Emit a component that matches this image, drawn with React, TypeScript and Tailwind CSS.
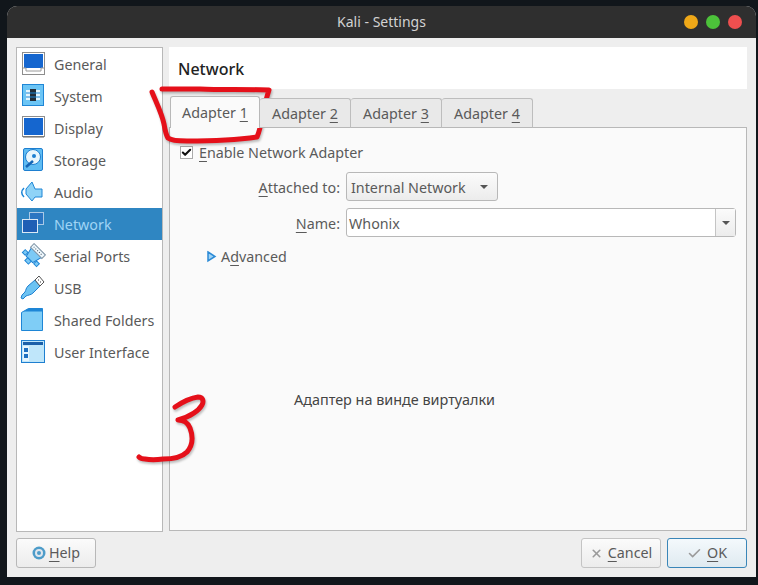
import React from 'react';
import { Check, X } from 'lucide-react';

const font = "font-['Noto_Sans','Open_Sans',sans-serif]";

// underlined mnemonic letter, like Qt shortcuts
const U = ({ children }: { children: React.ReactNode }) => (
  <span className="underline decoration-[1px] underline-offset-[3px]">{children}</span>
);

const GeneralIcon = () => (
  <svg width="26" height="26" viewBox="0 0 26 26">
    <rect x="2.5" y="1.5" width="22" height="22" fill="#fff" stroke="#8d8d8d" />
    <rect x="4" y="3" width="19" height="14" fill="#1566cf" />
    <path d="M3 17h3v3h15v-3h3" fill="none" stroke="#9a9a9a" />
  </svg>
);

const SystemIcon = () => (
  <svg width="26" height="26" viewBox="0 0 26 26">
    <rect x="2.5" y="1.5" width="21" height="21" fill="#6cc5f5" stroke="#1f86d6" />
    <rect x="6" y="7" width="14" height="10" fill="#e5f5fd" />
    <rect x="10" y="6" width="6" height="12" fill="#232c38" />
    <path d="M6 10h14M6 14h14" stroke="#1f86d6" />
  </svg>
);

const DisplayIcon = () => (
  <svg width="26" height="26" viewBox="0 0 26 26">
    <rect x="2.5" y="1.5" width="22" height="20" fill="#fff" stroke="#8d8d8d" />
    <rect x="4" y="3" width="19" height="17" fill="#1566cf" />
    <path d="M3 22h21" stroke="#666" />
  </svg>
);

const StorageIcon = () => (
  <svg width="26" height="26" viewBox="0 0 26 26">
    <rect x="3.5" y="1.5" width="19" height="22" rx="1.5" fill="#5fbcf2" stroke="#1e7fd0" />
    <circle cx="13" cy="10" r="7.5" fill="#e8f6fd" stroke="#1e7fd0" />
    <circle cx="14" cy="9" r="2" fill="#1e7fd0" />
    <path d="M6 20l7-6" stroke="#1565b5" strokeWidth="2.5" />
  </svg>
);

const AudioIcon = () => (
  <svg width="26" height="26" viewBox="0 0 26 26">
    <path d="M6 10L12 3L15 10H22V18H15L12 22L6 15z" fill="#8fd3f7" stroke="#1e86d6" />
    <path d="M4 9c-3 3-3 6 0 9" fill="none" stroke="#1e86d6" strokeWidth="1.5" />
  </svg>
);

const NetworkIcon = () => (
  <svg width="26" height="26" viewBox="0 0 26 26">
    <rect x="9.5" y="1.5" width="14" height="12" fill="#2b76c2" stroke="#a9c9e6" />
    <rect x="2.5" y="8.5" width="15" height="13" fill="#1f5fb5" stroke="#dbe9f5" />
  </svg>
);

const SerialIcon = () => (
  <svg width="26" height="26" viewBox="0 0 26 26">
    <g transform="rotate(45 13 13)">
      <path d="M6 8H20L17.5 18H8.5z" fill="#7cc9f5" stroke="#1e7fd0" />
      <rect x="5" y="3.5" width="16" height="5" fill="#eef7fc" stroke="#7d93a5" />
      <path d="M7 6h12" stroke="#4a5a68" strokeDasharray="1 1.5" />
      <rect x="3" y="14" width="4" height="4" fill="#7cc9f5" stroke="#1e86d6" />
      <rect x="19" y="14" width="4" height="4" fill="#7cc9f5" stroke="#1e86d6" />
      <rect x="10.5" y="18" width="5" height="4" fill="#7cc9f5" stroke="#1e86d6" />
    </g>
  </svg>
);

const UsbIcon = () => (
  <svg width="26" height="26" viewBox="0 0 26 26">
    <path d="M8 11l7-6 5 6-7 7c-2 2-5 2-7 3l-3 3-2-1 1-3 3-3c1-2 1-4 3-6z" fill="#6cc3f3" stroke="#1e7fd0" />
    <path d="M15 5l4-4 5 6-4 4z" fill="#fff" stroke="#555" />
    <path d="M18 5h1M20 7h1" stroke="#333" />
  </svg>
);

const FolderIcon = () => (
  <svg width="26" height="26" viewBox="0 0 26 26">
    <path d="M1.5 5.5l7-4h14v22h-21z" fill="#7fcdf6" stroke="#1e86d6" />
    <path d="M8.5 1.5l-5 3h19v-3z" fill="#1e86d6" />
  </svg>
);

const InterfaceIcon = () => (
  <svg width="26" height="26" viewBox="0 0 26 26">
    <rect x="1.5" y="1.5" width="23" height="22" fill="#bfe6fa" stroke="#1e7fd0" />
    <rect x="3" y="3" width="20" height="3" fill="#1b5fa8" />
    <rect x="3" y="7" width="6" height="15" fill="#e6f5fd" />
    <rect x="4" y="9" width="4" height="4" fill="#1e70c0" />
    <rect x="4" y="15" width="4" height="4" fill="#1e70c0" />
  </svg>
);

const items = [
  { name: 'General', icon: GeneralIcon },
  { name: 'System', icon: SystemIcon },
  { name: 'Display', icon: DisplayIcon },
  { name: 'Storage', icon: StorageIcon },
  { name: 'Audio', icon: AudioIcon },
  { name: 'Network', icon: NetworkIcon, active: true },
  { name: 'Serial Ports', icon: SerialIcon },
  { name: 'USB', icon: UsbIcon },
  { name: 'Shared Folders', icon: FolderIcon },
  { name: 'User Interface', icon: InterfaceIcon },
];

const Caret = () => <span className="w-0 h-0 border-x-[4px] border-x-transparent border-t-[4px] border-t-[#555]" />;

const Sidebar = () => (
  <div className="w-[147px] h-[485px] shrink-0 bg-white border border-[#b8b8b8]">
    {items.map((item) => (
      <div
        key={item.name}
        className={`h-[32px] flex items-center gap-[8px] pl-[3px] ${item.active ? 'bg-[#2f86c2] text-[#9fd4f5]' : 'text-[#5a5a5a]'}`}
      >
        <item.icon />
        <span className="pt-[2px]">{item.name}</span>
      </div>
    ))}
  </div>
);

const tabs = ['2', '3', '4'];

const Tabs = () => (
  <div className="flex items-end h-[32px] pl-[1px] relative z-10 -mb-[1px]">
    <div className="w-[90px] h-[32px] bg-[#fafafa] border border-b-0 border-[#b8b8b8] rounded-t-[3px] flex items-center justify-center text-[#5a5a5a]">
      <span>Adapter <U>1</U></span>
    </div>
    {tabs.map((t) => (
      <div
        key={t}
        className="w-[91px] h-[30px] bg-[#e9e9e9] border border-l-0 border-b-[#b8b8b8] border-[#bdbdbd] rounded-t-[3px] flex items-center justify-center text-[#5a5a5a]"
      >
        <span className="pt-[2px]">Adapter <U>{t}</U></span>
      </div>
    ))}
  </div>
);

const AdapterPane = () => (
  <div className="w-[578px] h-[404px] bg-[#fafafa] border border-[#b8b8b8] pt-[15px] text-[#5a5a5a]">
    <div className="flex items-center h-[18px] pl-[10px] gap-[6px]">
      <span className="w-[13px] h-[13px] bg-white border border-[#aaa] flex items-center justify-center">
        <Check size={11} strokeWidth={4.5} className="text-[#111]" />
      </span>
      <span className="pt-[2px]"><U>E</U>nable Network Adapter</span>
    </div>
    <div className="flex items-center mt-[11px] h-[29px]">
      <span className="w-[170px] text-right pt-[2px]"><U>A</U>ttached to:</span>
      <div className="ml-[6px] w-[152px] h-[29px] pl-[4px] pr-[9px] flex items-center justify-between border border-[#b8b8b8] rounded-[3px] bg-gradient-to-b from-[#fbfbfb] to-[#ececec]">
        <span className="pt-[2px]">Internal Network</span>
        <Caret />
      </div>
    </div>
    <div className="flex items-center mt-[7px] h-[29px]">
      <span className="w-[170px] text-right pt-[2px]"><U>N</U>ame:</span>
      <div className="ml-[6px] w-[390px] h-[29px] pl-[2px] flex items-center justify-between border border-[#b8b8b8] rounded-[3px] bg-white">
        <span className="pt-[2px]">Whonix</span>
        <span className="w-[20px] h-full border-l border-[#c4c4c4] flex items-center justify-center bg-gradient-to-b from-[#fbfbfb] to-[#ececec]">
          <Caret />
        </span>
      </div>
    </div>
    <div className="flex items-center mt-[9px] h-[22px] pl-[36px] gap-[3px]">
      <svg width="12" height="14" viewBox="0 0 12 14">
        <path d="M2 2l7 4.5L2 11z" fill="#9fd3f5" stroke="#2b8ad6" strokeWidth="1.5" />
      </svg>
      <span>A<U>d</U>vanced</span>
    </div>
  </div>
);

const Footer = () => (
  <div className="flex justify-between mt-[6px] pr-[9px] text-[#5a5a5a]">
    <button className="w-[80px] h-[30px] border border-[#b8b8b8] rounded-[3px] bg-gradient-to-b from-[#fbfbfb] to-[#ececec] flex items-center justify-center gap-[3px]">
      <svg width="14" height="14" viewBox="0 0 14 14">
        <circle cx="7" cy="7" r="6.5" fill="#4d9cc9" />
        <circle cx="7" cy="7" r="3" fill="none" stroke="#dfe6ee" strokeWidth="2" />
      </svg>
      <span><U>H</U>elp</span>
    </button>
    <div className="flex gap-[6px]">
      <button className="w-[80px] h-[30px] border border-[#c4c4c4] rounded-[3px] bg-gradient-to-b from-[#fbfbfb] to-[#ececec] flex items-center justify-center gap-[5px]">
        <X size={13} strokeWidth={3} className="text-[#9a9a9a]" />
        <span><U>C</U>ancel</span>
      </button>
      <button className="w-[80px] h-[30px] border border-[#3a86b8] rounded-[3px] bg-gradient-to-b from-[#f4f9fc] to-[#dfeaf0] flex items-center justify-center gap-[5px]">
        <Check size={15} strokeWidth={2.5} className="text-[#9a9a9a]" />
        <span><U>O</U>K</span>
      </button>
    </div>
  </div>
);

export default function App() {
  return (
    <div className={`relative w-[758px] h-[585px] overflow-hidden bg-[#11161b] pt-[6px] pl-[7px] text-[14.3px] leading-[20px] ${font}`}>
      <div className="w-[749px] h-[571px] rounded-t-[10px] overflow-hidden bg-[#eeeeee]">
        <div className="relative h-[32px] bg-[#2f2f2f] flex items-center justify-center text-[#d2d2d2] text-[14px]">
          <span>Kali - Settings</span>
          <div className="absolute right-[14px] top-[9px] flex gap-[8px]">
            <span className="w-[14px] h-[14px] rounded-full bg-[#efa818]" />
            <span className="w-[14px] h-[14px] rounded-full bg-[#4cc23a]" />
            <span className="w-[14px] h-[14px] rounded-full bg-[#ee4f4f]" />
          </div>
        </div>
        <div className="pl-[9px] pt-[9px]">
          <div className="flex gap-[6px]">
            <Sidebar />
            <div>
              <div className="w-[578px] h-[42px] bg-white flex items-center pl-[9px] pt-[2px] text-[16px] font-medium text-[#222]">
                Network
              </div>
              <div className="mt-[7px]">
                <Tabs />
                <AdapterPane />
              </div>
            </div>
          </div>
          <Footer />
        </div>
      </div>

      {/* text pasted on top of the screenshot */}
      <span className="absolute left-[294px] top-[390px] text-[14.4px] text-[#444] [text-shadow:0_0_2px_#fff]">
        Адаптер на винде виртуалки
      </span>

      {/* red marker annotations */}
      <svg
        className="absolute left-0 top-0 pointer-events-none drop-shadow-[1px_2px_1px_rgba(0,0,0,0.25)]"
        width="758"
        height="585"
        viewBox="0 0 758 585"
        fill="none"
      >
        <path
          d="M152 92C156 102 162 114 164 124C165 130 166 135 168 138C172 141 180 141 187 141C210 141 236 140 257 137C260 130 261 124 262 117C264 108 266 99 269 90C245 89 222 90 200 89C187 89 174 89 162 89"
          stroke="#e5101a"
          strokeWidth="5"
          strokeLinecap="round"
          strokeLinejoin="round"
        />
        <path
          d="M175 407C181 403 190 398 198 397C203 397 204 401 202 405C198 412 188 417 178 420C184 420 188 423 190 428C193 436 193 445 187 452C181 458 172 459 163 459C156 460 150 460 145 459C142 459 140 458 139 457"
          stroke="#e5101a"
          strokeWidth="5"
          strokeLinecap="round"
          strokeLinejoin="round"
        />
      </svg>
    </div>
  );
}
